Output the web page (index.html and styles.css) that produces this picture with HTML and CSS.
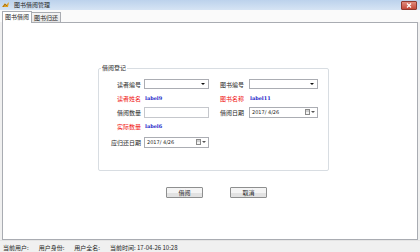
FILE: index.html
```html
<!DOCTYPE html>
<html>
<head>
  <title>图书借阅管理</title>
  <meta charset="UTF-8">
  <link rel="stylesheet" href="styles.css">
</head>
<body>
  <div class="window">
    <div class="titlebar">
      <svg class="app-icon" width="7" height="6" viewBox="0 0 7 6">
        <path d="M0 5 L3 1 L4 3 L7 0 L6 5 Z" fill="#e0a020"/>
        <path d="M1 5 L3 2 L5 4" fill="none" stroke="#7a5010" stroke-width="0.6"/>
      </svg>
      <span class="title">图书借阅管理</span>
      <span class="close">
        <svg width="6" height="5" viewBox="0 0 6 5"><path d="M1 0.5 L5 4.5 M5 0.5 L1 4.5" stroke="#fff" stroke-width="1.2"/></svg>
      </span>
    </div>

    <div class="tabs">
      <div class="tab active">图书借阅</div>
      <div class="tab">图书归还</div>
    </div>

    <div class="page">
      <div class="group">
        <span class="group-title">借阅登记</span>
        <div class="form">
          <label>读者编号</label>
          <div class="combo"><span class="arrow"></span></div>
          <label>图书编号</label>
          <div class="combo"><span class="arrow"></span></div>

          <span class="red">读者姓名</span>
          <span class="value">label9</span>
          <span class="red">图书名称</span>
          <span class="value">label11</span>

          <label>借阅数量</label>
          <div class="textbox"></div>
          <label>借阅日期</label>
          <div class="date">
            <span class="date-text">2017/ 4/26</span>
            <span class="cal"></span><span class="arrow"></span>
          </div>

          <span class="red">实际数量</span>
          <span class="value">label6</span>
          <span></span>
          <span></span>

          <label class="due">应归还日期</label>
          <div class="date">
            <span class="date-text">2017/ 4/26</span>
            <span class="cal"></span><span class="arrow"></span>
          </div>
        </div>
      </div>

      <div class="buttons">
        <button>借阅</button>
        <button>取消</button>
      </div>
    </div>

    <div class="statusbar">
      <span>当前用户:</span>
      <span>用户身份:</span>
      <span>用户全名:</span>
      <span>当前时间: 17-04-26 10:28</span>
    </div>
  </div>
</body>
</html>
```

FILE: styles.css
```css
:root {
  --panel-color: #f0f0f0;
  --border-color: #a9acb2;
  --text-color: #1e1e1e;
  --red-text: #f01010;
  --blue-text: #1c1cc8;
}

body {
  margin: 0;
  width: 420px;
  height: 252px;
  overflow: hidden;
  font-family: "Noto Sans CJK SC", "DejaVu Sans", sans-serif;
  font-size: 6px;
  color: var(--text-color);
}

.window {
  display: flex;
  flex-direction: column;
  height: 252px;
  background-color: var(--panel-color);
}

.titlebar {
  height: 10px;
  display: flex;
  align-items: center;
  gap: 4px;
  padding: 0 3px 0 2px;
  background: linear-gradient(#bcd2ec, #d6e4f4);
  flex-shrink: 0;
}

.title {
  flex: 1;
  line-height: 10px;
  margin-left: 1px;
}

.close {
  width: 14px;
  height: 7px;
  margin-top: 1px;
  display: flex;
  align-items: center;
  justify-content: center;
  background: linear-gradient(#e08a7c, #c4493a);
  border: 1px solid #8f3a30;
  border-radius: 1px;
}

/* Tabs */
.tabs {
  height: 12px;
  display: flex;
  align-items: flex-end;
  padding-left: 2px;
  background-color: #fafafa;
  flex-shrink: 0;
}

.tab {
  height: 9px;
  line-height: 9px;
  padding: 0 2px;
  border: 1px solid var(--border-color);
  border-bottom: none;
  background: linear-gradient(#f4f4f4, #e4e4e4);
  margin-left: -1px;
}

.tab.active {
  height: 11px;
  line-height: 10px;
  background-color: #fff;
  background-image: none;
  position: relative;
  z-index: 1;
  margin-bottom: -1px;
  margin-left: 0;
}

.page {
  height: 218px;
  margin: 0 2px;
  background-color: #fff;
  border: 1px solid var(--border-color);
  padding: 45px 0 0 95px;
  box-sizing: border-box;
  flex-shrink: 0;
}

/* Group box */
.group {
  position: relative;
  width: 231px;
  height: 103px;
  border: 1px solid #d8dde2;
  border-radius: 2px;
  box-sizing: border-box;
  padding: 8px 0 0 0;
}

.group-title {
  position: absolute;
  top: -5px;
  left: 2px;
  padding: 0 1px;
  line-height: 8px;
  background-color: #fff;
}

.form {
  display: grid;
  grid-template-columns: 42px 65px 34px 69px;
  grid-auto-rows: 14px;
  column-gap: 3px;
  align-items: center;
}

.form label,
.form .red {
  text-align: right;
  white-space: nowrap;
}

.form > :nth-child(4n+3) {
  text-align: left;
  margin-left: 8px;
}

.red {
  color: var(--red-text);
}

.value {
  color: var(--blue-text);
  font-family: "DejaVu Serif", serif;
  font-weight: bold;
  font-size: 5px;
  padding-left: 1px;
}

.due {
  margin-top: 4px;
}

.form .due + .date {
  margin-top: 4px;
}

.combo,
.textbox,
.date {
  height: 10px;
  border: 1px solid #abadb3;
  background-color: #fff;
  box-sizing: border-box;
  display: flex;
  align-items: center;
}

.textbox {
  height: 11px;
  border-color: #c5c7cc;
}

.date {
  height: 11px;
  padding-left: 2px;
}

.date-text {
  flex: 1;
  font-family: "DejaVu Sans", sans-serif;
  font-size: 5px;
  white-space: pre;
}

.arrow {
  margin-left: auto;
  margin-right: 3px;
  width: 0;
  height: 0;
  border-left: 2px solid transparent;
  border-right: 2px solid transparent;
  border-top: 2px solid #111;
}

.date .arrow {
  margin-left: 1px;
  margin-right: 2px;
  border-top-color: #555;
}

.cal {
  width: 5px;
  height: 6px;
  border: 1px solid #8a8a8a;
  box-sizing: border-box;
  background: linear-gradient(#d0d0d0 2px, #f4f4f4 2px);
}

/* Buttons */
.buttons {
  display: flex;
  gap: 27px;
  padding: 16px 0 0 68px;
}

button {
  width: 37px;
  height: 11px;
  padding: 0;
  font-family: inherit;
  font-size: 6px;
  line-height: 9px;
  color: var(--text-color);
  border: 1px solid #8e8f8f;
  border-radius: 1px;
  background: linear-gradient(#f4f4f4 50%, #e2e2e2 50%);
}

.statusbar {
  height: 12px;
  display: flex;
  gap: 10px;
  padding: 3px 0 0 3px;
  box-sizing: border-box;
  line-height: 8px;
  border-top: 1px solid #e4e4e4;
  flex-shrink: 0;
}
```
